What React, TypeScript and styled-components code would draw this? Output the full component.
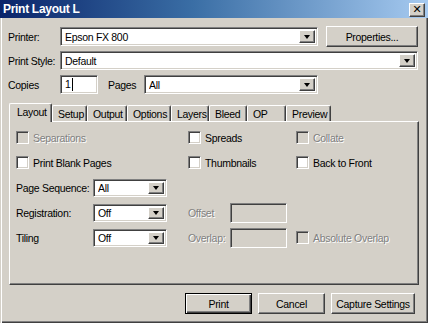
import React from "react";
import styled, { createGlobalStyle, css } from "styled-components";

const Global = createGlobalStyle`
  html, body { margin: 0; padding: 0; background: #d4d0c8; }
  * { box-sizing: border-box; }
`;

const FACE = "#d4d0c8";

const Window = styled.div`
  width: 428px;
  height: 323px;
  background: ${FACE};
  font-family: "Liberation Sans", Arial, sans-serif;
  font-size: 10.5px;
  letter-spacing: -0.3px;
  color: #000;
  display: flex;
  flex-direction: column;
  box-shadow: inset 1px 1px ${FACE}, inset 2px 2px #fff, inset -1px -1px #404040,
    inset -2px -2px #808080;
  overflow: hidden;
`;

const TitleBar = styled.div`
  height: 18px;
  display: flex;
  align-items: center;
  justify-content: space-between;
  padding: 0 3px 0 3px;
  background: linear-gradient(to right, #0a246a 0%, #3a6ea5 45%, #a6caf0 100%);
`;

const Title = styled.span`
  color: #fff;
  font-weight: bold;
  font-size: 12px;
  letter-spacing: -0.3px;
`;

const raised = css`
  background: ${FACE};
  border: 1px solid;
  border-color: #fff #404040 #404040 #fff;
  box-shadow: inset -1px -1px #808080;
`;

const sunken = css`
  border: 1px solid;
  border-color: #808080 #fff #fff #808080;
  box-shadow: inset 1px 1px #404040, inset -1px -1px ${FACE};
`;

const CloseButton = styled.div`
  ${raised};
  width: 16px;
  height: 14px;
  display: flex;
  align-items: center;
  justify-content: center;
  font-family: "DejaVu Sans", sans-serif;
  font-weight: bold;
  font-size: 11px;
  letter-spacing: 0;
  line-height: 1;
  margin-top: 1px;
`;

const Body = styled.div`
  flex: 1;
  display: flex;
  flex-direction: column;
  padding: 8px 10px 0 8px;
`;

const Row = styled.div<{ $h: number; $mt?: number }>`
  display: flex;
  align-items: center;
  height: ${(p) => p.$h}px;
  margin-top: ${(p) => p.$mt ?? 0}px;
`;

const Label = styled.span<{ $w?: number; $disabled?: boolean }>`
  display: inline-block;
  width: ${(p) => (p.$w ? `${p.$w}px` : "auto")};
  flex: none;
  white-space: nowrap;
  ${(p) =>
    p.$disabled &&
    css`
      color: #808080;
      text-shadow: 1px 1px #fff;
    `}
`;

const Field = styled.div<{ $w: number; $h?: number; $disabled?: boolean }>`
  ${sunken};
  width: ${(p) => p.$w}px;
  height: ${(p) => p.$h ?? 19}px;
  background: ${(p) => (p.$disabled ? FACE : "#fff")};
  display: flex;
  align-items: center;
  padding: 0 2px 0 4px;
  flex: none;
`;

const FieldText = styled.span`
  flex: 1;
  white-space: nowrap;
  overflow: hidden;
`;

const Caret = styled.span`
  display: inline-block;
  width: 1px;
  height: 13px;
  background: #000;
  margin-left: 1px;
  vertical-align: middle;
`;

const ArrowButton = styled.div`
  ${raised};
  width: 16px;
  height: calc(100% - 4px);
  display: flex;
  align-items: center;
  justify-content: center;
  flex: none;
  &::after {
    content: "";
    width: 0;
    height: 0;
    border-left: 3.5px solid transparent;
    border-right: 3.5px solid transparent;
    border-top: 4px solid #000;
  }
`;

const Combo = ({ w, h, text }: { w: number; h?: number; text: string }) => (
  <Field $w={w} $h={h}>
    <FieldText>{text}</FieldText>
    <ArrowButton />
  </Field>
);

const Button = styled.div<{ $w: number; $default?: boolean }>`
  ${raised};
  width: ${(p) => p.$w}px;
  height: 21px;
  display: flex;
  align-items: center;
  justify-content: center;
  flex: none;
  ${(p) =>
    p.$default &&
    css`
      border: 1px solid #000;
      box-shadow: inset 1px 1px #fff, inset -1px -1px #404040, inset -2px -2px #808080;
    `}
`;

const TabStrip = styled.div`
  display: flex;
  align-items: flex-end;
  height: 19px;
  margin-top: 8px;
  margin-left: 1px;
  position: relative;
  z-index: 1;
`;

const Tab = styled.div<{ $w: number; $active?: boolean }>`
  width: ${(p) => p.$w}px;
  height: ${(p) => (p.$active ? 19 : 16)}px;
  margin-bottom: ${(p) => (p.$active ? -1 : 0)}px;
  background: ${FACE};
  border-top: 1px solid #fff;
  border-left: 1px solid #fff;
  border-right: 1px solid #404040;
  box-shadow: inset -1px 0 #808080;
  border-radius: 2px 2px 0 0;
  display: flex;
  align-items: center;
  padding-left: ${(p) => (p.$active ? 7 : 5)}px;
  padding-bottom: ${(p) => (p.$active ? 2 : 0)}px;
  white-space: nowrap;
  flex: none;
`;

const Panel = styled.div`
  height: 164px;
  margin-left: 1px;
  margin-right: -1px;
  border: 1px solid;
  border-color: #fff #404040 #404040 #fff;
  box-shadow: inset -1px -1px #808080;
  padding: 3px 0 0 6px;
  display: grid;
  grid-template-columns: 172px 108px 1fr;
  grid-auto-rows: 25px;
  align-items: center;
`;

const Cell = styled.div<{ $col?: number; $row?: number }>`
  display: flex;
  align-items: center;
  ${(p) => p.$col && `grid-column: ${p.$col};`}
  ${(p) => p.$row && `grid-row: ${p.$row};`}
`;

const Box = styled.span<{ $disabled?: boolean }>`
  ${sunken};
  width: 13px;
  height: 13px;
  background: ${(p) => (p.$disabled ? FACE : "#fff")};
  margin-right: 4px;
  flex: none;
`;

const Check = ({ label, disabled, col, row }: { label: string; disabled?: boolean; col: number; row: number }) => (
  <Cell $col={col} $row={row}>
    <Box $disabled={disabled} />
    <Label $disabled={disabled}>{label}</Label>
  </Cell>
);

const Footer = styled.div`
  display: flex;
  justify-content: flex-end;
  gap: 6px;
  margin-top: 8px;
  padding-right: 3px;
`;

const tabs: [string, number][] = [
  ["Layout", 43],
  ["Setup", 35],
  ["Output", 40],
  ["Options", 44],
  ["Layers", 38],
  ["Bleed", 38],
  ["OP", 39],
  ["Preview", 45],
];

export default function App() {
  return (
    <>
      <Global />
      <Window>
        <TitleBar>
          <Title>Print Layout L</Title>
          <CloseButton>✕</CloseButton>
        </TitleBar>
        <Body>
          <Row $h={21}>
            <Label $w={52}>Printer:</Label>
            <Combo w={258} text="Epson FX 800" />
            <Label $w={8} />
            <Button $w={92}>Properties...</Button>
          </Row>
          <Row $h={19} $mt={4}>
            <Label $w={52}>Print Style:</Label>
            <Combo w={358} text="Default" />
          </Row>
          <Row $h={19} $mt={5}>
            <Label $w={52}>Copies</Label>
            <Field $w={38}>
              <FieldText>
                1<Caret />
              </FieldText>
            </Field>
            <Label $w={10} />
            <Label $w={36}>Pages</Label>
            <Combo w={174} text="All" />
          </Row>
          <TabStrip>
            {tabs.map(([t, w], i) => (
              <Tab key={t} $w={w} $active={i === 0}>
                {t}
              </Tab>
            ))}
          </TabStrip>
          <Panel>
            <Check col={1} row={1} label="Separations" disabled />
            <Check col={2} row={1} label="Spreads" />
            <Check col={3} row={1} label="Collate" disabled />
            <Check col={1} row={2} label="Print Blank Pages" />
            <Check col={2} row={2} label="Thumbnails" />
            <Check col={3} row={2} label="Back to Front" />
            <Cell $col={1} $row={3}>
              <Label $w={77}>Page Sequence:</Label>
              <Combo w={74} h={18} text="All" />
            </Cell>
            <Cell $col={1} $row={4}>
              <Label $w={77}>Registration:</Label>
              <Combo w={74} h={18} text="Off" />
            </Cell>
            <Cell $col={2} $row={4}>
              <Label $w={42} $disabled>
                Offset
              </Label>
              <Field $w={57} $h={20} $disabled />
            </Cell>
            <Cell $col={1} $row={5}>
              <Label $w={77}>Tiling</Label>
              <Combo w={74} h={18} text="Off" />
            </Cell>
            <Cell $col={2} $row={5}>
              <Label $w={42} $disabled>
                Overlap:
              </Label>
              <Field $w={57} $h={20} $disabled />
            </Cell>
            <Check col={3} row={5} label="Absolute Overlap" disabled />
          </Panel>
          <Footer>
            <Button $w={67} $default>
              Print
            </Button>
            <Button $w={67}>Cancel</Button>
            <Button $w={84}>Capture Settings</Button>
          </Footer>
        </Body>
      </Window>
    </>
  );
}
